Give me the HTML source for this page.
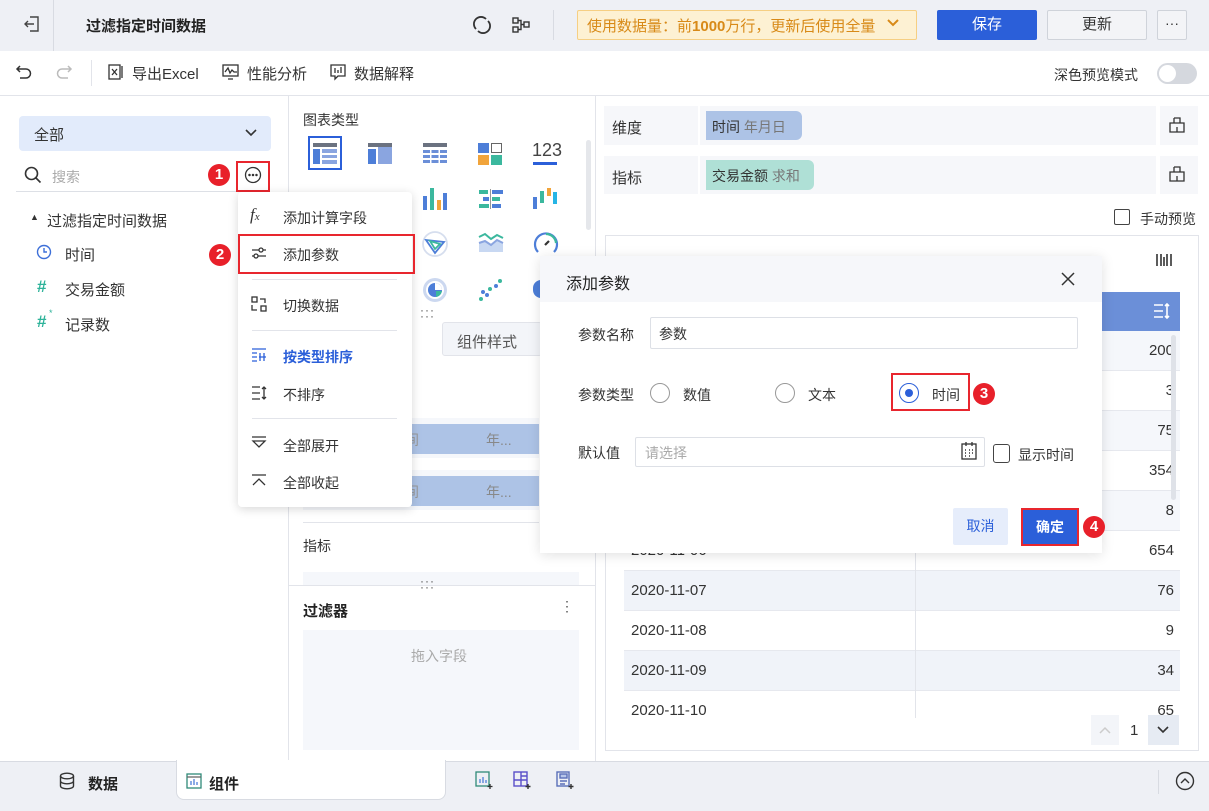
<!DOCTYPE html>
<html><head><meta charset="utf-8"><style>
*{box-sizing:border-box;margin:0;padding:0}
body{width:1209px;height:811px;overflow:hidden;position:relative;background:#fff;font-family:"Liberation Sans","Noto Sans CJK SC",sans-serif;font-size:14px;color:#333}
.a{position:absolute}
.t{position:absolute;white-space:nowrap}
svg{position:absolute;overflow:visible}
.badge{position:absolute;width:22px;height:22px;border-radius:11px;background:#e8202a;color:#fff;font-size:15px;font-weight:bold;text-align:center;line-height:22px}
.red{position:absolute;border:2px solid #e8262e}
</style></head><body>
<!-- top bar -->
<div class="a" style="left:0;top:0;width:1209px;height:51px;background:#eef0f5"></div>
<div class="a" style="left:53px;top:0;width:1px;height:51px;background:#d8dbe2"></div>
<svg style="left:22px;top:14px" width="20" height="20" viewBox="0 0 20 20" fill="none" stroke="#444" stroke-width="1.4"><path d="M8 3h8v14H8M3 10h9M6 7l-3 3 3 3"/></svg>
<div class="t" style="left:86px;top:15px;font-size:15px;font-weight:bold;color:#222">过滤指定时间数据</div>
<svg style="left:472px;top:15px" width="20" height="20" viewBox="0 0 20 20" fill="none" stroke="#333" stroke-width="1.8"><path d="M4 14A7 7 0 0 1 14 4M16 6a7 7 0 0 1-10 10"/></svg>
<svg style="left:511px;top:15px" width="20" height="20" viewBox="0 0 20 20" fill="none" stroke="#333" stroke-width="1.4"><rect x="2" y="3" width="5" height="5"/><rect x="2" y="12" width="5" height="5"/><rect x="13" y="7" width="5" height="5"/><path d="M7 5.5h3v9H7M10 9.5h3"/></svg>
<div class="a" style="left:553px;top:10px;width:1px;height:30px;background:#d8dbe2"></div>
<div class="a" style="left:577px;top:10px;width:340px;height:30px;background:#fdf1d3;border:1px solid #f6cf83;border-radius:2px"></div>
<div class="t" style="left:587px;top:15px;font-size:15px;color:#d88a18">使用数据量：前<b>1000</b>万行，更新后使用全量</div>
<svg style="left:886px;top:18px" width="14" height="10" viewBox="0 0 14 10" fill="none" stroke="#d88a18" stroke-width="2"><path d="M2 2l5 5 5-5"/></svg>
<div class="a" style="left:937px;top:10px;width:100px;height:30px;background:#2b5fd9;border-radius:2px;color:#fff;font-size:15px;text-align:center;line-height:30px">保存</div>
<div class="a" style="left:1047px;top:10px;width:100px;height:30px;background:#f3f4f7;border:1px solid #cfd3da;border-radius:2px;font-size:15px;text-align:center;line-height:28px;color:#333">更新</div>
<div class="a" style="left:1157px;top:10px;width:30px;height:30px;background:#f3f4f7;border:1px solid #cfd3da;border-radius:2px;text-align:center;line-height:24px;color:#333">···</div>
<!-- toolbar -->
<div class="a" style="left:0;top:95px;width:1209px;height:1px;background:#e2e4ea"></div>
<svg style="left:15px;top:63px" width="18" height="18" viewBox="0 0 18 18" fill="none" stroke="#333" stroke-width="1.5"><path d="M5 3L2 6l3 3M2 6h9a4.5 4.5 0 0 1 0 9H5"/></svg>
<svg style="left:55px;top:63px" width="18" height="18" viewBox="0 0 18 18" fill="none" stroke="#bbb" stroke-width="1.5"><path d="M13 3l3 3-3 3M16 6H7a4.5 4.5 0 0 0 0 9h6"/></svg>
<div class="a" style="left:91px;top:60px;width:1px;height:26px;background:#e2e4ea"></div>
<svg style="left:108px;top:64px" width="16" height="16" viewBox="0 0 16 16" fill="none" stroke="#333" stroke-width="1.3"><rect x="1" y="1" width="11" height="14"/><path d="M4 5l5 6M9 5l-5 6M14 2v12"/></svg>
<div class="t" style="left:132px;top:63px;font-size:15px">导出Excel</div>
<svg style="left:222px;top:64px" width="17" height="16" viewBox="0 0 17 16" fill="none" stroke="#333" stroke-width="1.3"><rect x="1" y="1" width="15" height="11"/><path d="M3 8l3-4 2 5 2-3 2 2h3M6 15h5"/></svg>
<div class="t" style="left:247px;top:63px;font-size:15px">性能分析</div>
<svg style="left:330px;top:64px" width="16" height="17" viewBox="0 0 16 17" fill="none" stroke="#333" stroke-width="1.3"><path d="M1 1h14v11H8l-3 3v-3H1z"/><path d="M5 4v5M8 6v3M11 3v6"/></svg>
<div class="t" style="left:354px;top:63px;font-size:15px">数据解释</div>
<div class="t" style="left:1054px;top:65px;font-size:14px">深色预览模式</div>
<div class="a" style="left:1157px;top:63px;width:40px;height:21px;border-radius:11px;background:#d5d8de"></div>
<div class="a" style="left:1159px;top:65px;width:17px;height:17px;border-radius:9px;background:#fff"></div>
<!-- panels -->
<div class="a" style="left:288px;top:96px;width:1px;height:665px;background:#e2e4ea"></div>
<div class="a" style="left:595px;top:96px;width:1px;height:665px;background:#e2e4ea"></div>
<!-- left panel -->
<div class="a" style="left:19px;top:116px;width:252px;height:35px;background:#e2ebfb;border-radius:4px"></div>
<div class="t" style="left:34px;top:124px;font-size:15px">全部</div>
<svg style="left:244px;top:128px" width="14" height="10" viewBox="0 0 14 10" fill="none" stroke="#333" stroke-width="1.6"><path d="M2 2l5 5 5-5"/></svg>
<svg style="left:24px;top:166px" width="18" height="18" viewBox="0 0 18 18" fill="none" stroke="#333" stroke-width="1.6"><circle cx="7.5" cy="7.5" r="6"/><path d="M12 12l4.5 4.5"/></svg>
<div class="t" style="left:52px;top:167px;font-size:14px;color:#aaa">搜索</div>
<div class="a" style="left:16px;top:191px;width:220px;height:1px;background:#dde0e6"></div>
<svg style="left:244px;top:166px" width="18" height="18" viewBox="0 0 18 18" fill="none" stroke="#333" stroke-width="1.3"><circle cx="9" cy="9" r="7.5"/><circle cx="5.5" cy="9" r=".6" fill="#333"/><circle cx="9" cy="9" r=".6" fill="#333"/><circle cx="12.5" cy="9" r=".6" fill="#333"/></svg>
<div class="red" style="left:236px;top:161px;width:34px;height:31px"></div>
<div class="badge" style="left:208px;top:164px">1</div>
<div class="t" style="left:30px;top:212px;font-size:9px;color:#333">▲</div>
<div class="t" style="left:47px;top:210px;font-size:15px">过滤指定时间数据</div>
<svg style="left:36px;top:244px" width="16" height="16" viewBox="0 0 16 16" fill="none" stroke="#3d6fd8" stroke-width="1.4"><circle cx="8" cy="8" r="6.5"/><path d="M8 4v4h3"/></svg>
<div class="t" style="left:65px;top:244px;font-size:15px">时间</div>
<div class="t" style="left:37px;top:277px;font-size:17px;color:#2fb39a;font-weight:bold">#</div>
<div class="t" style="left:65px;top:279px;font-size:15px">交易金额</div>
<div class="t" style="left:37px;top:312px;font-size:17px;color:#2fb39a;font-weight:bold">#</div>
<div class="t" style="left:49px;top:308px;font-size:9px;color:#2fb39a">*</div>
<div class="t" style="left:65px;top:314px;font-size:15px">记录数</div>
<!-- middle panel -->
<div class="t" style="left:303px;top:110px;font-size:14px">图表类型</div>
<div class="a" style="left:308px;top:136px;width:34px;height:34px;border:2px solid #2b5fd9"></div>
<svg style="left:313px;top:143px" width="24" height="21" viewBox="0 0 24 21"><rect width="24" height="4" fill="#6b7280"/><rect y="6" width="7" height="15" fill="#4d7ed8"/><rect x="9" y="6" width="15" height="4" fill="#8aa5e0"/><rect x="9" y="12" width="15" height="3" fill="#8aa5e0"/><rect x="9" y="17" width="15" height="4" fill="#8aa5e0"/></svg>
<svg style="left:368px;top:143px" width="24" height="21" viewBox="0 0 24 21"><rect width="24" height="4" fill="#6b7280"/><rect y="6" width="8" height="15" fill="#4d7ed8"/><rect x="10" y="0" width="14" height="21" fill="#8aa5e0"/><rect x="10" width="14" height="4" fill="#6b7280"/></svg>
<svg style="left:423px;top:143px" width="24" height="21" viewBox="0 0 24 21"><rect width="24" height="4" fill="#6b7280"/><g fill="#6b8fd8"><rect y="7" width="7" height="3"/><rect x="8.5" y="7" width="7" height="3"/><rect x="17" y="7" width="7" height="3"/><rect y="12" width="7" height="3"/><rect x="8.5" y="12" width="7" height="3"/><rect x="17" y="12" width="7" height="3"/><rect y="17" width="7" height="3"/><rect x="8.5" y="17" width="7" height="3"/><rect x="17" y="17" width="7" height="3"/></g></svg>
<div class="a" style="left:478px;top:143px;width:11px;height:10px;background:#4d7ed8"></div>
<div class="a" style="left:491px;top:143px;width:11px;height:10px;border:1.5px solid #666"></div>
<div class="a" style="left:478px;top:155px;width:11px;height:10px;background:#f1a43b"></div>
<div class="a" style="left:491px;top:155px;width:11px;height:10px;background:#3bb89e"></div>
<div class="t" style="left:532px;top:140px;font-size:18px;color:#444">123</div>
<div class="a" style="left:533px;top:162px;width:24px;height:3px;background:#2b5fd9"></div>
<svg style="left:423px;top:188px" width="24" height="22" viewBox="0 0 24 22"><rect x="0" y="8" width="4" height="14" fill="#4d7ed8"/><rect x="7" y="0" width="4" height="22" fill="#3bb89e"/><rect x="14" y="12" width="4" height="10" fill="#f1a43b"/><rect x="20" y="5" width="4" height="17" fill="#4d7ed8"/></svg>
<svg style="left:479px;top:189px" width="24" height="20" viewBox="0 0 24 20"><rect x="0" y="1" width="9" height="4" fill="#3bb89e"/><rect x="13" y="1" width="11" height="4" fill="#4d7ed8"/><rect x="4" y="8" width="6" height="4" fill="#4d7ed8"/><rect x="13" y="8" width="8" height="4" fill="#3bb89e"/><rect x="0" y="15" width="10" height="4" fill="#3bb89e"/><rect x="13" y="15" width="9" height="4" fill="#4d7ed8"/><rect x="11" y="0" width="1" height="20" fill="#999"/></svg>
<svg style="left:533px;top:188px" width="24" height="22" viewBox="0 0 24 22"><rect x="0" y="9" width="4" height="12" fill="#4d7ed8"/><rect x="7" y="3" width="4" height="12" fill="#3bb89e"/><rect x="14" y="0" width="4" height="8" fill="#f1a43b"/><rect x="20" y="4" width="4" height="12" fill="#26b5e5"/></svg>
<svg style="left:422px;top:231px" width="26" height="26" viewBox="0 0 26 26" fill="none" stroke-width="1.8"><circle cx="13" cy="13" r="12" stroke="#d6deee"/><path d="M4 9l18 2-9 11z" stroke="#4d7ed8"/><path d="M8 10l10 3-5 5z" stroke="#3bb89e"/></svg>
<svg style="left:478px;top:232px" width="26" height="22" viewBox="0 0 26 22" stroke-width="2"><path d="M1 11V20h24V11l-6-3-6 5-6-4z" fill="#c8d8f2" stroke="none"/><path d="M1 11l6-2 6 4 6-5 6 3" stroke="#8aa5e0" fill="none"/><path d="M1 5l6-3 6 5 6-4 6 3" stroke="#3bb89e" fill="none"/></svg>
<svg style="left:533px;top:231px" width="26" height="26" viewBox="0 0 26 26" fill="none" stroke-width="2.2"><path d="M5 21A11 11 0 1 1 21 21" stroke="#4d7ed8"/><path d="M13 3A10 10 0 0 1 23 12" stroke="#3bb89e"/><path d="M12 14l4-4" stroke="#333"/></svg>
<svg style="left:422px;top:277px" width="26" height="26" viewBox="0 0 26 26"><circle cx="13" cy="13" r="12" fill="#ccd8f0"/><circle cx="13" cy="13" r="9" fill="#fff"/><circle cx="13" cy="13" r="7" fill="#4d7ed8"/><path d="M13 13V6a7 7 0 0 1 7 7z" fill="#fff"/><path d="M14 14h6a7 7 0 0 1-6 6z" fill="#3bb89e"/></svg>
<svg style="left:478px;top:277px" width="26" height="26" viewBox="0 0 26 26" fill="#3bb89e"><circle cx="3" cy="22" r="2"/><circle cx="9" cy="18" r="2" fill="#4d7ed8"/><circle cx="12" cy="12" r="2"/><circle cx="18" cy="9" r="2" fill="#4d7ed8"/><circle cx="22" cy="4" r="2"/><circle cx="5" cy="15" r="2" fill="#4d7ed8"/></svg>
<div class="a" style="left:533px;top:280px;width:8px;height:18px;border-radius:9px 0 0 9px;background:#4d7ed8"></div>
<div class="a" style="left:586px;top:140px;width:5px;height:90px;border-radius:3px;background:#e5e7eb"></div>
<div class="t" style="left:420px;top:307px;font-size:12px;color:#555;letter-spacing:1px;line-height:6px">···<br>···</div>
<div class="a" style="left:442px;top:322px;width:100px;height:34px;background:#f3f5f9;border:1px solid #e2e4ea;border-radius:3px"></div>
<div class="t" style="left:457px;top:331px;font-size:15px;color:#555">组件样式</div>
<div class="a" style="left:303px;top:418px;width:236px;height:40px;background:#f5f7fb"></div>
<div class="a" style="left:303px;top:424px;width:236px;height:30px;background:#adc3e6"></div>
<div class="t" style="left:486px;top:430px;font-size:14px;color:#888">年...</div>
<div class="t" style="left:405px;top:430px;font-size:14px;color:#999">间</div>
<div class="a" style="left:303px;top:470px;width:236px;height:40px;background:#f5f7fb"></div>
<div class="a" style="left:303px;top:476px;width:236px;height:30px;background:#adc3e6"></div>
<div class="t" style="left:486px;top:482px;font-size:14px;color:#888">年...</div>
<div class="t" style="left:405px;top:482px;font-size:14px;color:#999">间</div>
<div class="a" style="left:303px;top:522px;width:236px;height:1px;background:#e2e4ea"></div>
<div class="t" style="left:303px;top:536px;font-size:14px">指标</div>
<div class="a" style="left:303px;top:572px;width:276px;height:14px;background:#f5f7fb"></div>
<div class="a" style="left:288px;top:585px;width:307px;height:1px;background:#e2e4ea"></div>
<div class="t" style="left:420px;top:578px;font-size:12px;color:#555;letter-spacing:1px;line-height:6px">···<br>···</div>
<div class="t" style="left:303px;top:600px;font-size:15px;font-weight:bold;color:#222">过滤器</div>
<div class="t" style="left:560px;top:598px;font-size:14px;color:#555">⋮</div>
<div class="a" style="left:303px;top:630px;width:276px;height:120px;background:#f5f7fb"></div>
<div class="t" style="left:411px;top:646px;font-size:14px;color:#aaa">拖入字段</div>
<!-- right panel -->
<div class="a" style="left:604px;top:106px;width:94px;height:39px;background:#f6f7fa"></div>
<div class="a" style="left:700px;top:106px;width:456px;height:39px;background:#f6f7fa"></div>
<div class="a" style="left:1160px;top:106px;width:38px;height:39px;background:#f6f7fa"></div>
<div class="t" style="left:612px;top:117px;font-size:15px">维度</div>
<div class="a" style="left:706px;top:111px;width:96px;height:29px;background:#adc3e6;border-radius:0 6px 6px 0"></div>
<div class="t" style="left:712px;top:117px;font-size:14px">时间 <span style="color:#777">年月日</span></div>
<div class="a" style="left:604px;top:156px;width:94px;height:38px;background:#f6f7fa"></div>
<div class="a" style="left:700px;top:156px;width:456px;height:38px;background:#f6f7fa"></div>
<div class="a" style="left:1160px;top:156px;width:38px;height:38px;background:#f6f7fa"></div>
<div class="t" style="left:612px;top:167px;font-size:15px">指标</div>
<div class="a" style="left:706px;top:160px;width:108px;height:30px;background:#afe0d6;border-radius:0 6px 6px 0"></div>
<div class="t" style="left:712px;top:166px;font-size:14px">交易金额 <span style="color:#777">求和</span></div>
<svg style="left:1169px;top:117px" width="16" height="16" viewBox="0 0 16 16" fill="none" stroke="#333" stroke-width="1.3"><path d="M5 1h6v5M5 1v5M1 6h14v9H1zM8 10v5"/></svg>
<svg style="left:1169px;top:166px" width="16" height="16" viewBox="0 0 16 16" fill="none" stroke="#333" stroke-width="1.3"><path d="M5 1h6v5M5 1v5M1 6h14v9H1zM8 10v5"/></svg>
<div class="a" style="left:1114px;top:209px;width:16px;height:16px;border:1.3px solid #444;border-radius:2px"></div>
<div class="t" style="left:1140px;top:209px;font-size:14px">手动预览</div>
<div class="a" style="left:605px;top:235px;width:594px;height:516px;border:1px solid #e2e4ea"></div>
<svg style="left:1155px;top:251px" width="18" height="18" viewBox="0 0 18 18" stroke="#333" stroke-width="1.6"><path d="M2 3v12M6 3v12M9 6v9M12 3v12M16 3v12"/></svg>
<div class="a" style="left:624px;top:292px;width:556px;height:39px;background:#6b8fd8"></div>
<svg style="left:1153px;top:302px" width="18" height="18" viewBox="0 0 18 18" fill="none" stroke="#fff" stroke-width="1.6"><path d="M1 3h9M1 9h9M1 15h9M14 2v14M12 4l2-2 2 2M12 14l2 2 2-2"/></svg>
<div class="a" style="left:624px;top:331px;width:556px;height:387px;overflow:hidden">
<div style="height:40px;background:#f5f7fb;border-bottom:1px solid #e6e8ee"></div>
<div style="height:40px;background:#fff;border-bottom:1px solid #e6e8ee"></div>
<div style="height:40px;background:#f5f7fb;border-bottom:1px solid #e6e8ee"></div>
<div style="height:40px;background:#fff;border-bottom:1px solid #e6e8ee"></div>
<div style="height:40px;background:#f5f7fb;border-bottom:1px solid #e6e8ee"></div>
<div style="height:40px;background:#fff;border-bottom:1px solid #e6e8ee"></div>
<div style="height:40px;background:#f0f3f9;border-bottom:1px solid #e6e8ee"></div>
<div style="height:40px;background:#fff;border-bottom:1px solid #e6e8ee"></div>
<div style="height:40px;background:#f0f3f9;border-bottom:1px solid #e6e8ee"></div>
<div style="height:40px;background:#fff"></div>
<div class="a" style="left:291px;top:0;width:1px;height:400px;background:#e2e4ea"></div>
</div>
<div class="t" style="right:35px;top:342px;font-size:15px;text-align:right">200</div>
<div class="t" style="right:35px;top:382px;font-size:15px">3</div>
<div class="t" style="right:35px;top:422px;font-size:15px">75</div>
<div class="t" style="right:35px;top:462px;font-size:15px">354</div>
<div class="t" style="right:35px;top:502px;font-size:15px">8</div>
<div class="t" style="right:35px;top:542px;font-size:15px">654</div>
<div class="t" style="right:35px;top:582px;font-size:15px">76</div>
<div class="t" style="right:35px;top:622px;font-size:15px">9</div>
<div class="t" style="right:35px;top:662px;font-size:15px">34</div>
<div class="t" style="right:35px;top:702px;font-size:15px;height:16px;overflow:hidden">65</div>
<div class="t" style="left:631px;top:542px;font-size:15px">2020-11-06</div>
<div class="t" style="left:631px;top:582px;font-size:15px">2020-11-07</div>
<div class="t" style="left:631px;top:622px;font-size:15px">2020-11-08</div>
<div class="t" style="left:631px;top:662px;font-size:15px">2020-11-09</div>
<div class="t" style="left:631px;top:702px;font-size:15px;height:16px;overflow:hidden">2020-11-10</div>
<div class="a" style="left:1171px;top:335px;width:5px;height:165px;border-radius:3px;background:#dfe2e8"></div>
<div class="a" style="left:1091px;top:715px;width:28px;height:30px;background:#f3f5f9"></div>
<svg style="left:1098px;top:725px" width="14" height="10" viewBox="0 0 14 10" fill="none" stroke="#ccc" stroke-width="1.5"><path d="M2 8l5-5 5 5"/></svg>
<div class="t" style="left:1130px;top:722px;font-size:15px">1</div>
<div class="a" style="left:1148px;top:715px;width:31px;height:30px;background:#e6ebf3"></div>
<svg style="left:1156px;top:725px" width="14" height="10" viewBox="0 0 14 10" fill="none" stroke="#333" stroke-width="1.6"><path d="M2 2l5 5 5-5"/></svg>
<!-- bottom bar -->
<div class="a" style="left:0;top:761px;width:1209px;height:50px;background:#eef0f5;border-top:1px solid #d8dbe2"></div>
<svg style="left:59px;top:772px" width="16" height="18" viewBox="0 0 16 18" fill="none" stroke="#333" stroke-width="1.4"><ellipse cx="8" cy="4" rx="6.5" ry="2.8"/><path d="M1.5 4v10c0 1.6 3 2.8 6.5 2.8s6.5-1.2 6.5-2.8V4M1.5 9c0 1.6 3 2.8 6.5 2.8s6.5-1.2 6.5-2.8"/></svg>
<div class="t" style="left:88px;top:773px;font-size:15px;font-weight:bold;color:#222">数据</div>
<div class="a" style="left:176px;top:760px;width:270px;height:40px;background:#fff;border:1px solid #d8dbe2;border-top:none;border-radius:0 0 8px 8px"></div>
<svg style="left:186px;top:773px" width="16" height="16" viewBox="0 0 16 16" fill="none" stroke="#2f8a78" stroke-width="1.3"><rect x="1" y="1" width="14" height="14"/><path d="M1 4h14" stroke="#666"/><path d="M5 12V8M8 12V6M11 12V9" stroke="#4d7ed8"/></svg>
<div class="t" style="left:209px;top:773px;font-size:15px;font-weight:bold;color:#222">组件</div>
<svg style="left:475px;top:771px" width="18" height="18" viewBox="0 0 18 18" fill="none" stroke="#2f8a78" stroke-width="1.3"><rect x="1" y="1" width="13" height="14"/><path d="M5 12V8M8 12V6M11 12V9" stroke="#4d7ed8"/><path d="M15 13v5M12.5 15.5h5" stroke="#333"/></svg>
<svg style="left:513px;top:771px" width="18" height="18" viewBox="0 0 18 18" fill="none" stroke="#5a4fc9" stroke-width="1.4"><rect x="1" y="1" width="13" height="14"/><path d="M1 9h13M8 1v14M14 5H8"/><path d="M15 13v5M12.5 15.5h5" stroke="#333"/></svg>
<svg style="left:556px;top:771px" width="18" height="18" viewBox="0 0 18 18" fill="none" stroke="#5a6fb9" stroke-width="1.4"><rect x="1" y="1" width="12" height="14"/><rect x="4" y="3" width="7" height="4" fill="#b8c7ea"/><path d="M4 10h7M4 13h5"/><path d="M15 13v5M12.5 15.5h5" stroke="#333"/></svg>
<div class="a" style="left:1158px;top:770px;width:1px;height:24px;background:#d8dbe2"></div>
<svg style="left:1175px;top:771px" width="20" height="20" viewBox="0 0 20 20" fill="none" stroke="#333" stroke-width="1.4"><circle cx="10" cy="10" r="8.5"/><path d="M6 12l4-4 4 4"/></svg>
<!-- dropdown menu -->
<div class="a" style="left:238px;top:192px;width:174px;height:315px;background:#fff;border-radius:4px;box-shadow:0 2px 10px rgba(0,0,0,.16)"></div>
<div class="t" style="left:250px;top:205px;font-size:17px;font-style:italic;font-family:'Liberation Serif',serif;color:#333">f<span style="font-size:11px">x</span></div>
<div class="t" style="left:283px;top:208px;font-size:14px">添加计算字段</div>
<svg style="left:251px;top:246px" width="16" height="14" viewBox="0 0 16 14" fill="none" stroke="#333" stroke-width="1.3"><path d="M1 4h14M1 10h14"/><circle cx="10" cy="4" r="2" fill="#fff"/><circle cx="5" cy="10" r="2" fill="#fff"/></svg>
<div class="t" style="left:283px;top:245px;font-size:14px">添加参数</div>
<div class="red" style="left:238px;top:234px;width:177px;height:40px"></div>
<div class="badge" style="left:209px;top:244px">2</div>
<div class="a" style="left:252px;top:279px;width:145px;height:1px;background:#e2e4ea"></div>
<svg style="left:251px;top:296px" width="16" height="16" viewBox="0 0 16 16" fill="none" stroke="#333" stroke-width="1.3"><rect x="1" y="1" width="5" height="5"/><rect x="10" y="10" width="5" height="5"/><path d="M9 3h5v4M1 9v5h5"/></svg>
<div class="t" style="left:283px;top:296px;font-size:14px">切换数据</div>
<div class="a" style="left:252px;top:330px;width:145px;height:1px;background:#e2e4ea"></div>
<svg style="left:251px;top:348px" width="16" height="14" viewBox="0 0 16 14" fill="none" stroke="#2b5fd9" stroke-width="1.3"><path d="M1 1h14M1 5h5M1 9h5M1 13h5M9 5v8M13 5v8M8 9h7"/></svg>
<div class="t" style="left:283px;top:347px;font-size:14px;color:#2b5fd9;font-weight:bold">按类型排序</div>
<svg style="left:251px;top:386px" width="16" height="14" viewBox="0 0 16 14" fill="none" stroke="#333" stroke-width="1.3"><path d="M1 1h8M1 7h8M1 13h8M13 1v12M11 3l2-2 2 2M11 11l2 2 2-2"/></svg>
<div class="t" style="left:283px;top:385px;font-size:14px">不排序</div>
<div class="a" style="left:252px;top:418px;width:145px;height:1px;background:#e2e4ea"></div>
<svg style="left:251px;top:436px" width="16" height="14" viewBox="0 0 16 14" fill="none" stroke="#333" stroke-width="1.3"><path d="M1 1h14M2 5h12l-6 6z"/></svg>
<div class="t" style="left:283px;top:436px;font-size:14px">全部展开</div>
<svg style="left:251px;top:474px" width="16" height="14" viewBox="0 0 16 14" fill="none" stroke="#333" stroke-width="1.3"><path d="M1 1h14M2 11l6-6 6 6"/></svg>
<div class="t" style="left:283px;top:473px;font-size:14px">全部收起</div>
<!-- dialog -->
<div class="a" style="left:540px;top:256px;width:562px;height:297px;background:#fff;box-shadow:0 2px 12px rgba(0,0,0,.12)"></div>
<div class="a" style="left:540px;top:256px;width:562px;height:46px;background:#f6f7fa"></div>
<div class="t" style="left:566px;top:270px;font-size:16px;color:#222">添加参数</div>
<svg style="left:1061px;top:272px" width="14" height="14" viewBox="0 0 14 14" stroke="#333" stroke-width="1.5"><path d="M1 1l12 12M13 1L1 13"/></svg>
<div class="t" style="left:578px;top:325px;font-size:14px">参数名称</div>
<div class="a" style="left:650px;top:317px;width:428px;height:32px;border:1px solid #dde0e6;border-radius:2px"></div>
<div class="t" style="left:659px;top:324px;font-size:14px">参数</div>
<div class="t" style="left:578px;top:385px;font-size:14px">参数类型</div>
<div class="a" style="left:650px;top:383px;width:20px;height:20px;border:1px solid #999;border-radius:50%"></div>
<div class="t" style="left:683px;top:385px;font-size:14px">数值</div>
<div class="a" style="left:775px;top:383px;width:20px;height:20px;border:1px solid #999;border-radius:50%"></div>
<div class="t" style="left:808px;top:385px;font-size:14px">文本</div>
<div class="a" style="left:899px;top:383px;width:20px;height:20px;border:1px solid #2b5fd9;border-radius:50%"></div>
<div class="a" style="left:905px;top:389px;width:8px;height:8px;background:#2b5fd9;border-radius:50%"></div>
<div class="t" style="left:932px;top:385px;font-size:14px">时间</div>
<div class="red" style="left:891px;top:373px;width:79px;height:38px"></div>
<div class="badge" style="left:973px;top:383px">3</div>
<div class="t" style="left:578px;top:443px;font-size:14px">默认值</div>
<div class="a" style="left:635px;top:437px;width:350px;height:30px;border:1px solid #dde0e6;border-radius:2px"></div>
<div class="t" style="left:645px;top:443px;font-size:14px;color:#aaa">请选择</div>
<svg style="left:961px;top:442px" width="16" height="18" viewBox="0 0 16 18" fill="none" stroke="#333" stroke-width="1.3"><rect x="1" y="2" width="14" height="15"/><path d="M5 0v4M11 0v4"/><path d="M4 8h1M8 8h1M11 8h1M4 11h1M8 11h1M11 11h1M4 14h1M8 14h1" stroke-width="1.6"/></svg>
<div class="a" style="left:993px;top:444px;width:17px;height:19px;border:1.3px solid #444;border-radius:3px"></div>
<div class="t" style="left:1018px;top:445px;font-size:14px">显示时间</div>
<div class="a" style="left:953px;top:508px;width:55px;height:37px;background:#e6edfb;border-radius:2px;color:#2b5fd9;font-size:14px;text-align:center;line-height:37px">取消</div>
<div class="a" style="left:1021px;top:508px;width:58px;height:38px;background:#2b5fd9;border:2px solid #e8262e;color:#fff;font-size:14px;text-align:center;line-height:34px;font-weight:bold">确定</div>
<div class="badge" style="left:1083px;top:516px">4</div>
</body></html>
